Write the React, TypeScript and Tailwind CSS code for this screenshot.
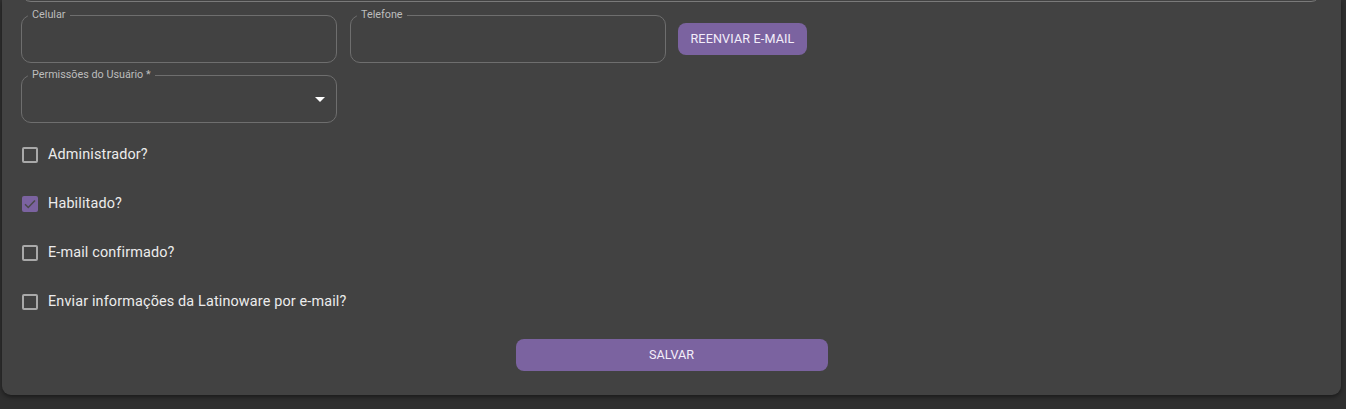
import React from 'react';

function OutlinedField({ label, select, className = '' }: { label?: string; select?: boolean; className?: string }) {
  return (
    <div className={`relative h-[48px] rounded-[10px] border border-[#6e6e6e] ${className}`}>
      {label && (
        <span className="absolute -top-[8px] left-[6px] bg-[#424242] px-[4px] text-[10.8px] leading-[14px] text-[#bdbdbd]">
          {label}
        </span>
      )}
      {select && (
        <svg className="absolute right-[11px] top-[21px]" width="10" height="5" viewBox="0 0 10 5">
          <path d="M0 0h10L5 5z" fill="#ffffff" />
        </svg>
      )}
    </div>
  );
}

function CheckRow({ label, checked }: { label: string; checked?: boolean }) {
  return (
    <div className="flex h-[49px] items-center gap-[10px] pl-[1px]">
      {checked ? (
        <span className="flex h-[16px] w-[16px] items-center justify-center rounded-[2px] bg-[#7b63a0]">
          <svg width="14" height="14" viewBox="0 0 24 24">
            <path d="M3.5 12.5l5.5 5.5L20.5 6" fill="none" stroke="#4a4a4a" strokeWidth="2.6" />
          </svg>
        </span>
      ) : (
        <span className="h-[16px] w-[16px] rounded-[2px] border-2 border-[#a9a9a9]" />
      )}
      <span className="text-[14.4px] tracking-[0.15px] text-[#ececec]">{label}</span>
    </div>
  );
}

export default function App() {
  return (
    <div className="h-[409px] overflow-hidden bg-[#2f2f2f]" style={{ fontFamily: 'Roboto, "Liberation Sans", sans-serif' }}>
      <div className="ml-[2px] flex w-[1339px] flex-col rounded-b-[9px] bg-[#424242] px-[19px] pb-[24px] shadow-[0_2px_4px_rgba(0,0,0,0.45)]">
        <div className="-mt-[46px] h-[48px] w-[1300px] rounded-[10px] border border-[#7a7a7a]" />
        <div className="mt-[13px] flex items-center">
          <OutlinedField label="Celular" className="w-[316px]" />
          <OutlinedField label="Telefone" className="ml-[13px] w-[316px]" />
          <button className="ml-[12px] h-[32px] w-[129px] rounded-[8px] bg-[#7b63a0] text-[12.6px] font-normal tracking-[0.15px] text-[#f3eefa]">
            REENVIAR E-MAIL
          </button>
        </div>
        <OutlinedField label="Permissões do Usuário *" select className="mt-[12px] w-[316px]" />
        <div className="mt-[7px] flex flex-col">
          <CheckRow label="Administrador?" />
          <CheckRow label="Habilitado?" checked />
          <CheckRow label="E-mail confirmado?" />
          <CheckRow label="Enviar informações da Latinoware por e-mail?" />
        </div>
        <div className="mt-[13px] flex justify-center">
          <button className="h-[32px] w-[312px] rounded-[8px] bg-[#7b63a0] text-[12.6px] font-normal text-[#f3eefa]">
            SALVAR
          </button>
        </div>
      </div>
    </div>
  );
}
